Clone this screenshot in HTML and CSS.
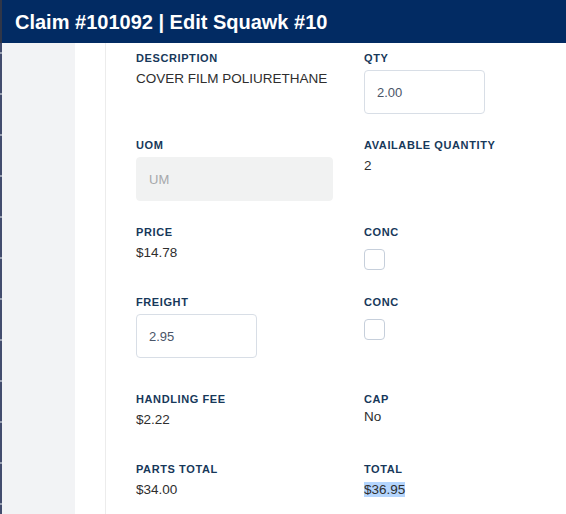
FILE: index.html
```html
<!DOCTYPE html>
<html lang="en">
<head>
<meta charset="utf-8">
<title>Claim #101092 | Edit Squawk #10</title>
<link rel="stylesheet" href="styles.css">
</head>
<body>
<div class="page">
  <div class="rail">
    <div class="rail-top"></div>
    <div class="rail-bottom"></div>
  </div>
  <div class="app">
    <header class="header">
      <h1 class="title">Claim #101092 | Edit Squawk #10</h1>
    </header>
    <div class="body">
      <aside class="sidebar"></aside>
      <div class="gutter"></div>
      <main class="panel">
        <div class="form">
          <div class="field">
            <div class="label">Description</div>
            <div class="value">COVER FILM POLIURETHANE</div>
          </div>
          <div class="field">
            <div class="label">Qty</div>
            <div class="input input-short">2.00</div>
          </div>

          <div class="field">
            <div class="label">UOM</div>
            <div class="input input-disabled">UM</div>
          </div>
          <div class="field">
            <div class="label">Available Quantity</div>
            <div class="value value-low">2</div>
          </div>

          <div class="field">
            <div class="label">Price</div>
            <div class="value value-low">$14.78</div>
          </div>
          <div class="field">
            <div class="label">Conc</div>
            <div class="checkbox"></div>
          </div>

          <div class="field">
            <div class="label">Freight</div>
            <div class="input input-short">2.95</div>
          </div>
          <div class="field">
            <div class="label">Conc</div>
            <div class="checkbox"></div>
          </div>

          <div class="field">
            <div class="label">Handling Fee</div>
            <div class="value value-low">$2.22</div>
          </div>
          <div class="field">
            <div class="label">Cap</div>
            <div class="value value-tight">No</div>
          </div>

          <div class="field">
            <div class="label">Parts Total</div>
            <div class="value value-low">$34.00</div>
          </div>
          <div class="field">
            <div class="label">Total</div>
            <div class="value value-low"><span class="selected">$36.95</span></div>
          </div>
        </div>
      </main>
    </div>
  </div>
</div>
</body>
</html>
```

FILE: styles.css
```css
* { box-sizing: border-box; }

html, body {
  margin: 0;
  padding: 0;
  background: #ffffff;
}

body {
  font-family: "Liberation Sans", Arial, sans-serif;
  width: 566px;
  height: 514px;
  overflow: hidden;
}

.page {
  display: flex;
  height: 514px;
}

.rail {
  width: 2px;
  display: flex;
  flex-direction: column;
  flex-shrink: 0;
}

.rail-top {
  height: 43px;
  background: #2f3648;
}

.rail-bottom {
  flex: 1;
  background: repeating-linear-gradient(to bottom,
    #434d6e 0px, #434d6e 9px,
    #9aa1b3 9px, #9aa1b3 11px,
    #434d6e 11px, #434d6e 41px);
}

.app {
  flex: 1;
  display: flex;
  flex-direction: column;
  min-width: 0;
}

.header {
  height: 43px;
  background: #022b63;
  display: flex;
  align-items: center;
  padding-left: 13px;
  flex-shrink: 0;
}

.title {
  margin: 0;
  color: #ffffff;
  font-size: 20px;
  font-weight: 700;
  line-height: 24px;
}

.body {
  flex: 1;
  display: flex;
}

.sidebar {
  width: 73px;
  background: #f2f3f5;
  flex-shrink: 0;
}

.gutter {
  width: 30px;
  flex-shrink: 0;
}

.panel {
  flex: 1;
  border-left: 1px solid #ececec;
  padding: 8px 0 0 30px;
}

.form {
  display: grid;
  grid-template-columns: 197px 1fr;
  grid-template-rows: 87px 87px 70px 97px 70px 60px;
  column-gap: 31px;
  align-items: start;
}

.label {
  font-size: 11px;
  font-weight: 700;
  line-height: 14px;
  letter-spacing: 0.6px;
  text-transform: uppercase;
  color: #17385a;
  margin-bottom: 5px;
}

.value {
  font-size: 13.5px;
  line-height: 18px;
  color: #2e2e2e;
}

.value-low {
  margin-top: 2px;
}

.value-tight {
  margin-top: -3px;
}

.input {
  height: 44px;
  border: 1px solid #d8dee6;
  border-radius: 4px;
  background: #ffffff;
  padding: 0 12px;
  display: flex;
  align-items: center;
  font-size: 13px;
  color: #4a5568;
  margin-top: 4px;
}

.input-short {
  width: 121px;
}

.input-disabled {
  width: 197px;
  background: #f1f2f2;
  border-color: #f1f2f2;
  color: #a6a8ab;
}

.checkbox {
  width: 21px;
  height: 21px;
  border: 1px solid #c6cfdb;
  border-radius: 4px;
  background: #ffffff;
  margin-top: 10px;
}

.selected {
  background: #b4d5fd;
}
```
